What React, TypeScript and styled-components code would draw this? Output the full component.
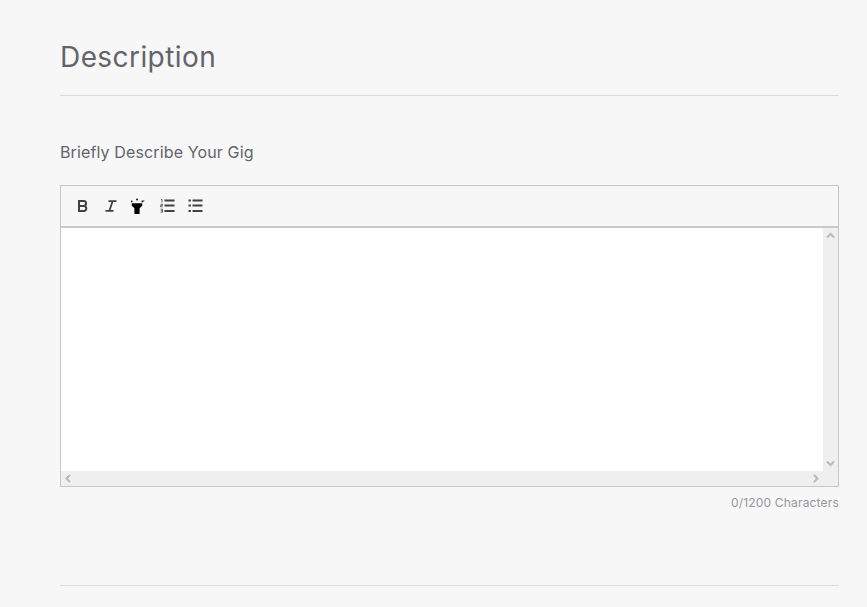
import React from "react";
import styled, { createGlobalStyle } from "styled-components";

const Global = createGlobalStyle`
  html, body { margin: 0; padding: 0; background: #f7f7f7; overflow: hidden; }
  body { font-family: Inter, "Liberation Sans", sans-serif; }
`;
const Page = styled.div`
  width: 867px; height: 607px; box-sizing: border-box; overflow: hidden;
  padding: 0 28px 0 60px; background: #f7f7f7;
`;
const Header = styled.div`
  height: 96px; box-sizing: border-box; padding-top: 39px;
  border-bottom: 1px solid #dadbdd;
`;
const Title = styled.h2`
  margin: 0; font-weight: 400; font-size: 28px; line-height: 36px; color: #62646a; letter-spacing: 0.42px;
`;
const Label = styled.div`
  margin-top: 46px; height: 20px; font-size: 16px; line-height: 20px; color: #62646a; letter-spacing: 0.13px;
`;
const Editor = styled.div`
  margin-top: 23px; height: 302px; box-sizing: border-box; border: 1px solid #c5c6c9;
  display: flex; flex-direction: column;
`;
const Toolbar = styled.div`
  height: 42px; flex: none; box-sizing: border-box; border-bottom: 2px solid #c9cacc;
  display: flex; align-items: center; padding-left: 8px; background: #f7f7f7;
`;
const Tool = styled.button`
  width: 28px; height: 24px; padding: 0; border: 0; background: none;
  display: flex; align-items: center; justify-content: center; color: #404145;
`;
const Body = styled.div`
  flex: 1; display: grid; grid-template-columns: 1fr 15px; grid-template-rows: 1fr 15px; min-height: 0;
`;
const TextArea = styled.div` background: #fff; `;
const VBar = styled.div`
  background: #efefef; display: flex; flex-direction: column; justify-content: space-between;
  align-items: center; padding: 3px 0;
`;
const HBar = styled.div`
  background: #efefef; display: flex; justify-content: space-between; align-items: center; padding: 0 3px;
`;
const Corner = styled.div` background: #efefef; `;
const Count = styled.div`
  margin-top: 8px; height: 16px; text-align: right; font-size: 12px; line-height: 16px; color: #95979d; letter-spacing: 0.18px;
`;
const Divider = styled.div`
  margin-top: 74px; height: 1px; background: #dadbdd;
`;

const Chevron = ({ d }: { d: string }) => (
  <svg width="9" height="9" viewBox="0 0 9 9" fill="none" stroke="#b9b9b9" strokeWidth="2"><path d={d} /></svg>
);

export default function App() {
  return (
    <Page>
      <Global />
      <Header><Title>Description</Title></Header>
      <Label>Briefly Describe Your Gig</Label>
      <Editor>
        <Toolbar>
          <Tool aria-label="Bold">
            <svg width="14" height="14" viewBox="0 0 14 14" fill="none" stroke="#404145" strokeWidth="2">
              <path d="M3 2h4.6a2.4 2.4 0 0 1 0 4.9H3zM3 6.9h5.2a2.6 2.6 0 0 1 0 5.1H3z" />
            </svg>
          </Tool>
          <Tool aria-label="Italic">
            <svg width="14" height="14" viewBox="0 0 14 14" fill="none" stroke="#404145" strokeWidth="1.8">
              <path d="M4.5 2.2H12.5M1.5 11.8H9.5M8.6 2.2L5.4 11.8" />
            </svg>
          </Tool>
          <Tool aria-label="Highlight">
            <svg width="16" height="17" viewBox="2 0 16 17" fill="#000">
              <path d="M2.8 5.2h10.4v2.6l-2.6 2.4V16H5.4v-5.8L2.8 7.8z" />
              <circle cx="8" cy="1.5" r="0.9" /><circle cx="2.6" cy="3.4" r="0.9" /><circle cx="13.4" cy="3.4" r="0.9" />
              <circle cx="1.2" cy="2.8" r="0.6" /><circle cx="14.8" cy="2.8" r="0.6" />
            </svg>
          </Tool>
          <Tool aria-label="Ordered list">
            <svg width="15" height="14" viewBox="0 0 15 14" fill="none" stroke="#404145">
              <path d="M4.5 1.5h10M4.5 6.5h10M4.5 12h10" strokeWidth="2" />
              <path d="M1 .4h1v3M.6 5.2h2v1.2h-2v1.4h2M.6 10.2h2v3h-2M.8 11.7h1.6" strokeWidth="0.8" />
            </svg>
          </Tool>
          <Tool aria-label="Bullet list">
            <svg width="15" height="14" viewBox="0 0 15 14" fill="none" stroke="#404145" strokeWidth="2">
              <path d="M4.5 1.5h10M4.5 6.5h10M4.5 12h10M.5 1.5h2.4M.5 6.5h2.4M.5 12h2.4" />
            </svg>
          </Tool>
        </Toolbar>
        <Body>
          <TextArea />
          <VBar>
            <Chevron d="M1 6.5l3.5-3.5L8 6.5" />
            <Chevron d="M1 2.5l3.5 3.5L8 2.5" />
          </VBar>
          <HBar>
            <Chevron d="M6 1L2.5 4.5 6 8" />
            <Chevron d="M3 1l3.5 3.5L3 8" />
          </HBar>
          <Corner />
        </Body>
      </Editor>
      <Count>0/1200 Characters</Count>
      <Divider />
    </Page>
  );
}
